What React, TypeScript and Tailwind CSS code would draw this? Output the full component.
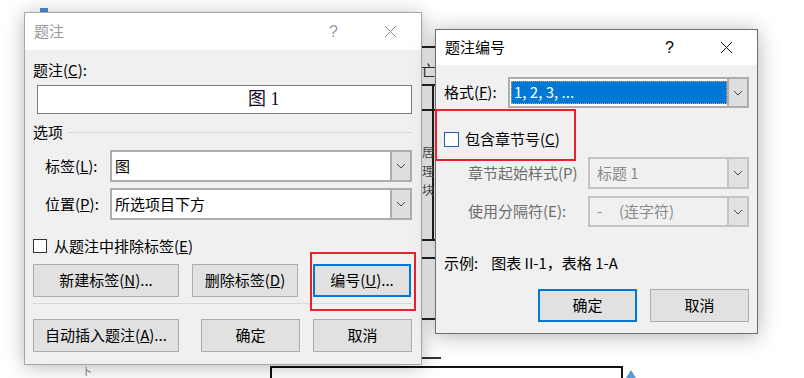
import type { ReactNode } from 'react'

const FONT = { fontFamily: '"Noto Sans CJK SC", "Noto Sans", sans-serif' }

function Chevron() {
  return (
    <svg width="10" height="6" viewBox="0 0 10 6" fill="none">
      <path d="M1 1 L5 5 L9 1" stroke="#444" strokeWidth="1" />
    </svg>
  )
}

function CloseIcon({ color }: { color: string }) {
  return (
    <svg width="13" height="13" viewBox="0 0 13 13" fill="none">
      <path d="M1 1 L12 12 M12 1 L1 12" stroke={color} strokeWidth="1" />
    </svg>
  )
}

function Btn({ children, w, focus }: { children: ReactNode; w: string; focus?: boolean }) {
  return (
    <div
      className={`${w} h-[33px] flex items-center justify-center bg-[#e1e1e1] text-[15px] text-black ${
        focus ? 'border-2 border-[#0078d7]' : 'border border-[#adadad]'
      }`}
    >
      {children}
    </div>
  )
}

function Combo({
  children,
  w,
  h = 'h-[32px]',
  disabled,
}: {
  children: ReactNode
  w: string
  h?: string
  disabled?: boolean
}) {
  return (
    <div
      className={`${w} ${h} flex border-2 ${
        disabled ? 'border-[#c4c4c4] bg-[#f0f0f0]' : 'border-[#adadad] bg-white'
      }`}
    >
      <div className={`flex-1 flex items-center text-[15px] ${disabled ? 'text-[#8a8a8a]' : 'text-black'}`}>
        {children}
      </div>
      <div
        className={`w-[20px] flex items-center justify-center border-l-2 ${
          disabled ? 'border-[#c4c4c4] bg-[#e2e2e2]' : 'border-[#adadad] bg-[#dedede]'
        }`}
      >
        <Chevron />
      </div>
    </div>
  )
}

function Check({ size, color }: { size: string; color: string }) {
  return <div className={`${size} bg-white border ${color} shrink-0`} />
}

function TitleBar({ title, active }: { title: string; active?: boolean }) {
  const c = active ? '#000' : '#999'
  return (
    <div className="flex items-center bg-white pl-[9px]">
      <span className="text-[15px]" style={{ color: c }}>
        {title}
      </span>
      <span className="ml-auto text-[16px]" style={{ color: c, fontFamily: '"Liberation Sans", sans-serif' }}>
        ?
      </span>
      <span className="ml-[46px] mr-[24px] flex">
        <CloseIcon color={active ? '#111' : '#8a8a8a'} />
      </span>
    </div>
  )
}

export default function App() {
  return (
    <div className="relative w-[804px] h-[378px] bg-white overflow-hidden" style={FONT}>
      {/* document behind the dialogs */}
      <div className="absolute left-[40px] top-[8px] w-[8px] h-[5px] bg-[#4a8ad8]" />
      <div className="absolute left-[421px] top-[46px] w-[16px] h-[2px] bg-[#222]" />
      <div className="absolute left-[421px] top-[84px] w-[16px] h-[2px] bg-[#222]" />
      <div className="absolute left-[421px] top-[109px] w-[16px] h-[2px] bg-[#222]" />
      <div className="absolute left-[421px] top-[239px] w-[16px] h-[2px] bg-[#222]" />
      <div className="absolute left-[421px] top-[257px] w-[16px] h-[2px] bg-[#222]" />
      <div className="absolute left-[421px] top-[318px] w-[16px] h-[2px] bg-[#222]" />
      <div className="absolute left-[421px] top-[357px] w-[20px] h-[2px] bg-[#333]" />
      <div className="absolute left-[432px] top-[84px] w-[2px] h-[156px] bg-[#222]" />
      <div className="absolute left-[421px] top-[62px] text-[15px] text-[#333] leading-none">亡</div>
      <div className="absolute left-[422px] top-[142px] flex flex-col text-[12px] text-[#555] leading-[19px]">
        <span>居</span>
        <span>理</span>
        <span>块</span>
      </div>
      <div className="absolute left-[270px] top-[366px] w-[353px] h-[30px] border-2 border-[#111] border-b-0" />
      <div className="absolute left-[626px] top-[370px] w-0 h-0 border-l-[5px] border-r-[5px] border-b-[8px] border-l-transparent border-r-transparent border-b-[#5b9bd5]" />
      <div className="absolute left-[82px] top-[366px] text-[10px] text-[#777] leading-none">卜</div>

      {/* 题注 dialog */}
      <div className="absolute left-[24px] top-[12px] w-[398px] h-[353px] flex flex-col border border-[#a6a6a6] bg-[#f0f0f0] shadow-[0_2px_18px_rgba(0,0,0,0.28)]">
        <div className="h-[37px] flex flex-col justify-center bg-white">
          <TitleBar title="题注" />
        </div>
        <div className="flex flex-col pl-[8px] pr-[9px]">
          <div className="mt-[10px] h-[20px] flex items-center text-[15px] text-black">
            题注(<u>C</u>):
          </div>
          <div
            className="mt-[5px] ml-[4px] h-[29px] flex items-center bg-white border border-[#7a7a7a] pl-[210px] text-[18px] text-[#1a0a2a]"
            style={{ fontFamily: '"Liberation Serif", "Noto Sans CJK SC", serif' }}
          >
            图 1
          </div>
          <div className="mt-[8px] h-[20px] flex items-center gap-[2px] text-[15px] text-black">
            <span>选项</span>
            <div className="flex-1 h-[1px] bg-[#d6d6d6] ml-[3px]" />
          </div>
          <div className="mt-[8px] flex items-center">
            <span className="ml-[12px] w-[65px] text-[15px] text-black">
              标签(<u>L</u>):
            </span>
            <Combo w="w-[302px]">
              <span className="pl-[3px]">图</span>
            </Combo>
          </div>
          <div className="mt-[6px] flex items-center">
            <span className="ml-[12px] w-[65px] text-[15px] text-black">
              位置(<u>P</u>):
            </span>
            <Combo w="w-[302px]">
              <span className="pl-[3px]">所选项目下方</span>
            </Combo>
          </div>
          <div className="mt-[16px] h-[20px] flex items-center gap-[7px] text-[15px] text-black">
            <Check size="w-[14px] h-[14px]" color="border-[#333]" />
            <span>
              从题注中排除标签(<u>E</u>)
            </span>
          </div>
          <div className="mt-[8px] flex">
            <Btn w="w-[146px]">
              新建标签(<u>N</u>)...
            </Btn>
            <div className="ml-[13px]">
              <Btn w="w-[106px]">
                删除标签(<u>D</u>)
              </Btn>
            </div>
            <div className="ml-[15px]">
              <Btn w="w-[98px]" focus>
                编号(<u>U</u>)...
              </Btn>
            </div>
          </div>
          <div className="mt-[6px] h-[1px] bg-[#d9d9d9]" />
          <div className="mt-[15px] flex">
            <Btn w="w-[146px]">
              自动插入题注(<u>A</u>)...
            </Btn>
            <div className="ml-[22px]">
              <Btn w="w-[99px]">确定</Btn>
            </div>
            <div className="ml-[13px]">
              <Btn w="w-[99px]">取消</Btn>
            </div>
          </div>
        </div>
      </div>

      {/* red highlight around 编号 */}
      <div className="absolute left-[310px] top-[252px] w-[106px] h-[59px] border-2 border-[#e8212d]" />

      {/* 题注编号 dialog */}
      <div className="absolute left-[435px] top-[29px] w-[323px] h-[305px] flex flex-col border border-[#6f6f6f] bg-[#f0f0f0] shadow-[0_2px_20px_rgba(0,0,0,0.3)]">
        <div className="h-[35px] flex flex-col justify-center bg-white">
          <TitleBar title="题注编号" active />
        </div>
        <div className="flex flex-col pl-[8px] pr-[7px]">
          <div className="mt-[12px] flex items-center">
            <span className="w-[64px] text-[15px] text-black">
              格式(<u>F</u>):
            </span>
            <Combo w="w-[241px]" h="h-[31px]">
              <div className="ml-[1px] w-full h-[23px] flex items-center bg-[#0078d7] border border-dotted border-[#d9a35c] pl-[2px] text-white">
                1, 2, 3, ...
              </div>
            </Combo>
          </div>
          <div className="mt-[21px] h-[20px] flex items-center gap-[6px] text-[15px] text-black">
            <Check size="w-[15px] h-[15px]" color="border-[#1f5fae]" />
            <span>
              包含章节号(<u>C</u>)
            </span>
          </div>
          <div className="mt-[8px] flex items-center">
            <span className="ml-[24px] w-[120px] text-[15px] text-[#6d6d6d]">章节起始样式(P)</span>
            <Combo w="w-[161px]" disabled>
              <span className="pl-[7px]">标题 1</span>
            </Combo>
          </div>
          <div className="mt-[7px] flex items-center">
            <span className="ml-[24px] w-[120px] text-[15px] text-[#6d6d6d]">使用分隔符(E):</span>
            <Combo w="w-[161px]" h="h-[31px]" disabled>
              <span className="pl-[7px] whitespace-pre">-     (连字符)</span>
            </Combo>
          </div>
          <div className="mt-[26px] h-[20px] flex items-center text-[15px] text-black">
            <span>示例:</span>
            <span className="ml-[13px]">图表 II-1，表格 1-A</span>
          </div>
          <div className="mt-[16px] flex justify-end pr-[1px]">
            <Btn w="w-[99px]" focus>
              确定
            </Btn>
            <div className="ml-[13px]">
              <Btn w="w-[99px]">取消</Btn>
            </div>
          </div>
        </div>
      </div>

      {/* red highlight around 包含章节号 */}
      <div className="absolute left-[435px] top-[109px] w-[141px] h-[52px] border-2 border-[#e8212d]" />
    </div>
  )
}
